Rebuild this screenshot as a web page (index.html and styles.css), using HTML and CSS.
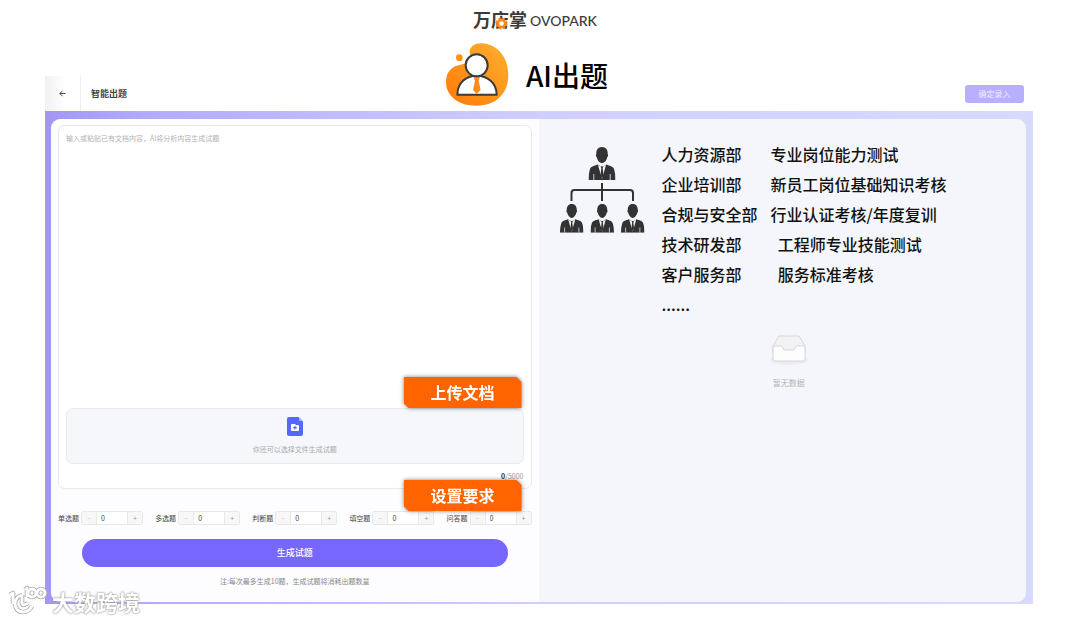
FILE: index.html
```html
<!DOCTYPE html>
<html lang="zh-CN">
<head>
    <meta charset="UTF-8">
    <title>AI出题</title>
    <link rel="stylesheet" href="styles.css">
</head>
<body>

    <div class="hero">
        <div class="brand">
            <span class="brand-cn">万店掌</span>
            <svg class="brand-gear" viewBox="0 0 14 14" aria-hidden="true">
                <circle cx="7" cy="7" r="4" fill="#fff" stroke="#ff8a1c" stroke-width="3"/>
                <circle cx="7" cy="7" r="5.8" fill="none" stroke="#ff8a1c" stroke-width="1.4" stroke-dasharray="2.6 2"/>
            </svg>
            <span class="brand-en">OVOPARK</span>
        </div>
        <div class="hero-title">
            <svg class="avatar" viewBox="48 128 189 189" aria-hidden="true">
                <defs>
                    <linearGradient id="blob" x1="1" y1="0" x2="0" y2="1">
                        <stop offset="0" stop-color="#ffb02e"/>
                        <stop offset="1" stop-color="#ff7a0a"/>
                    </linearGradient>
                </defs>
                <path d="M119 153C121 138 134 129 153 129C200 130 235 168 235 224C235 280 198 316 140 316C84 316 48 286 48 245C48 215 65 197 92 193C113 190 126 180 121 165Z" fill="url(#blob)"/>
                <circle cx="88" cy="172" r="10" fill="#ff9417"/>
                <path d="M82 283C82 247 108 226 140 226S200 247 200 283Z" fill="#fff" stroke="#3b3b3b" stroke-width="6" stroke-linejoin="round"/>
                <path d="M130 229H150L146 241L152 269L140 281L129 269L135 241Z" fill="#ff8a1c"/>
                <circle cx="140" cy="195" r="33" fill="#fff" stroke="#3b3b3b" stroke-width="6"/>
            </svg>
            <h1>AI出题</h1>
        </div>
    </div>

    <div class="app">
        <div class="app-header">
            <button class="back" aria-label="返回">
                <svg viewBox="0 0 8 8" aria-hidden="true"><path d="M7.5 4H1M4 1L1 4L4 7" fill="none" stroke="#333" stroke-width="1"/></svg>
            </button>
            <h2>智能出题</h2>
            <button class="confirm">确定录入</button>
        </div>

        <div class="frame">
            <div class="editor">
                <div class="doc-box">
                    <textarea class="doc-text" aria-label="文档内容" placeholder="输入或粘贴已有文档内容，AI将分析内容生成试题"></textarea>
                    <div class="upload-wrap">
                        <button class="upload">
                            <svg viewBox="0 0 16 19" aria-hidden="true">
                                <path d="M2 0H11.500L16 4.500V17Q16 19 14 19H2Q0 19 0 17V2Q0 0 2 0Z" fill="#5468fa"/>
                                <path d="M12 0L16 4H13Q12 4 12 3Z" fill="#a9b4ff"/>
                                <path d="M5 7H8L9 8H11Q12 8 12 9V13Q12 14 11 14H5Q4 14 4 13V8Q4 7 5 7Z" fill="#fff"/>
                                <path d="M8 9V12.500M6.200 10.700H9.800" stroke="#5468fa" stroke-width="1.200"/>
                            </svg>
                            <span>你还可以选择文件生成试题</span>
                        </button>
                        <div class="tag"><span>上传文档</span></div>
                    </div>
                    <div class="count"><b>0</b>/5000</div>
                </div>

                <div class="types">
                    <div class="type">
                        <label for="single">单选题</label>
                        <div class="stepper"><button aria-label="减少单选题">−</button><input id="single" type="text" value="0"><button aria-label="增加单选题">+</button></div>
                    </div>
                    <div class="type">
                        <label for="multi">多选题</label>
                        <div class="stepper"><button aria-label="减少多选题">−</button><input id="multi" type="text" value="0"><button aria-label="增加多选题">+</button></div>
                    </div>
                    <div class="type">
                        <label for="judge">判断题</label>
                        <div class="stepper"><button aria-label="减少判断题">−</button><input id="judge" type="text" value="0"><button aria-label="增加判断题">+</button></div>
                    </div>
                    <div class="type">
                        <label for="blank">填空题</label>
                        <div class="stepper"><button aria-label="减少填空题">−</button><input id="blank" type="text" value="0"><button aria-label="增加填空题">+</button></div>
                    </div>
                    <div class="type">
                        <label for="essay">问答题</label>
                        <div class="stepper"><button aria-label="减少问答题">−</button><input id="essay" type="text" value="0"><button aria-label="增加问答题">+</button></div>
                    </div>
                    <div class="tag tag-types"><span>设置要求</span></div>
                </div>

                <button class="generate">生成试题</button>
                <p class="note">注:每次最多生成10题，生成试题将消耗出题数量</p>
            </div>

            <div class="result">
                <div class="scenes">
                    <svg class="org" viewBox="0 0 85 86" aria-hidden="true">
                        <defs>
                            <symbol id="person" viewBox="0 0 27 33">
                                <path d="M13.500 0C17.500 0 19.500 3 19.200 7C20 7.500 19.500 10 18.700 10.200C18 13.500 16 16 13.500 16S9 13.500 8.300 10.200C7.500 10 7 7.500 7.800 7C7.500 3 9.500 0 13.500 0Z" fill="#333"/>
                                <path d="M9 17.500L13.500 20L18 17.500C21 19 24.500 19 25.500 22C26.500 25 27 29 27 33H0C0 29 .5 25 1.500 22C2.500 19 6 19 9 17.500Z" fill="#333"/>
                                <path d="M9.500 18L13.500 32L17.500 18L13.500 20Z" fill="#f5f6fb"/>
                                <path d="M12.300 19.500H14.700L14.200 21.500L15 28L13.500 32L12 28L12.800 21.500Z" fill="#333"/>
                                <path d="M5.300 27V33M21.700 27V33" stroke="#f5f6fb" stroke-width=".8"/>
                            </symbol>
                        </defs>
                        <use href="#person" x="28.500" y="0" width="27" height="33"/>
                        <path d="M42 36V54M11.500 54V46Q11.500 43 14.500 43H70Q73 43 73 46V54" fill="none" stroke="#333" stroke-width="2"/>
                        <use href="#person" x="0" y="57" width="23.500" height="28.700"/>
                        <use href="#person" x="30.500" y="57" width="23.500" height="28.700"/>
                        <use href="#person" x="61" y="57" width="23.500" height="28.700"/>
                    </svg>
                    <table class="scene-list">
                        <tr><td>人力资源部</td><td>专业岗位能力测试</td></tr>
                        <tr><td>企业培训部</td><td>新员工岗位基础知识考核</td></tr>
                        <tr><td>合规与安全部</td><td>行业认证考核/年度复训</td></tr>
                        <tr><td>技术研发部</td><td>&nbsp;&nbsp;工程师专业技能测试</td></tr>
                        <tr><td>客户服务部</td><td>&nbsp;&nbsp;服务标准考核</td></tr>
                        <tr><td>......</td><td></td></tr>
                    </table>
                </div>
                <div class="empty">
                    <svg viewBox="0 0 38 32" aria-hidden="true">
                        <ellipse cx="19" cy="26" rx="19" ry="5" fill="#ecedf1"/>
                        <path d="M3 12L9 2H29L35 12V20H3Z" fill="#f2f2f4" stroke="#d5d6da"/>
                        <path d="M3 12H11Q13 12 13 14Q13 16 15 16H23Q25 16 25 14Q25 12 27 12H35V25Q35 27 33 27H5Q3 27 3 25Z" fill="#fdfdfd" stroke="#d5d6da"/>
                    </svg>
                    <p>暂无数据</p>
                </div>
            </div>
        </div>
    </div>

    <div class="watermark">
        <svg viewBox="0 0 40 30" aria-hidden="true">
            <defs>
                <path id="mark" d="M2 9L5 7V18M14 9Q7 11 7 18Q8 26 15 26Q21 26 24 20M14 9V18Q16 20 20 17M17 4L19 2V11M28 7A4 4 0 1 0 20 7A4 4 0 1 0 28 7M37 7A4 4 0 1 0 29 7A4 4 0 1 0 37 7"/>
            </defs>
            <use href="#mark" fill="none" stroke="#b0b0b0" stroke-width="4.600" stroke-linejoin="round"/>
            <use href="#mark" fill="none" stroke="#fff" stroke-width="2.800" stroke-linejoin="round"/>
        </svg>
        <span>大数跨境</span>
    </div>

</body>
</html>
```
FILE: styles.css
```css
* {
    box-sizing: border-box;
}

body {
    display: flex;
    flex-direction: column;
    min-height: 100vh;
    margin: 0;
    padding: 0 47px 17px 45px;
    background-color: #fff;
    font-family: "Noto Sans CJK SC", sans-serif;
    font-size: 7px;
    line-height: 10px;
    color: #444;
}

h1, h2, p {
    margin: 0;
}

button, input, textarea {
    margin: 0;
    padding: 0;
    border: none;
    font: inherit;
    color: inherit;
}

button {
    cursor: pointer;
}

svg {
    display: block;
    overflow: visible;
}

/* top logo and title */
.hero {
    display: flex;
    flex-direction: column;
    align-items: center;
    padding: 8px 8px 0 0;
}

.brand {
    display: flex;
    position: relative;
    align-items: center;
    gap: 3px;
    height: 22px;
    color: #3a3a3a;
}

.brand-cn {
    font-size: 18px;
    font-weight: 700;
    line-height: 20px;
}

.brand-gear {
    position: absolute;
    left: 22px;
    top: 9px;
    width: 13px;
    height: 13px;
}

.brand-en {
    padding-top: 3px;
    font-family: Lato, sans-serif;
    font-size: 14px;
    font-weight: 500;
    line-height: 19px;
}

.hero-title {
    display: flex;
    align-items: center;
    gap: 17px;
    margin-top: 13px;
    padding-right: 16px;
}

.avatar {
    width: 63px;
    height: 63px;
}

.hero-title h1 {
    font-size: 28px;
    font-weight: 500;
    line-height: 40px;
    color: #000;
}

/* app window, its header sits beside the title */
.app {
    display: flex;
    flex: 1;
    flex-direction: column;
    margin-top: -30px;
}

.app-header {
    display: flex;
    align-items: center;
    height: 35px;
    padding-right: 9px;
}

.back {
    display: flex;
    align-items: center;
    justify-content: center;
    width: 36px;
    height: 35px;
    border-right: 1px solid #eee;
    background: linear-gradient(to right, #f1f1f1, #fff 60%);
}

.back svg {
    width: 7px;
    height: 7px;
}

.app-header h2 {
    flex: 1;
    padding-left: 10px;
    font-size: 9px;
    font-weight: 700;
}

.confirm {
    width: 59px;
    height: 18px;
    border-radius: 3px;
    background-color: #b8b0ff;
    font-size: 8px;
    color: #eeebff;
}

.frame {
    display: grid;
    flex: 1;
    grid-template-columns: 1fr 1fr;
    padding: 8px 7px 2px 6px;
    background: linear-gradient(to right, #a196f2, #b3aaff 10%, #d0ceff 50%, #d7daff);
}

.editor {
    display: flex;
    flex-direction: column;
    padding: 6px 7px 16px;
    border-radius: 9px 0 0 9px;
    background-color: #fdfdff;
}

.doc-box {
    display: flex;
    flex: 1;
    flex-direction: column;
    padding: 7px;
    border: 1px solid #e9e9ee;
    border-radius: 7px;
    background-color: #fff;
}

.doc-text {
    flex: 1;
    resize: none;
    outline: none;
    background: none;
}

.doc-text::placeholder {
    color: #b3b3b3;
}

.upload-wrap {
    position: relative;
}

.upload {
    display: flex;
    flex-direction: column;
    align-items: center;
    gap: 8px;
    width: 100%;
    height: 56px;
    padding-top: 8px;
    border: 1px solid #e8eaef;
    border-radius: 7px;
    background-color: #f6f7fb;
    color: #aaa;
}

.upload svg {
    width: 16px;
    height: 19px;
}

.count {
    margin-top: 7px;
    text-align: right;
    color: #999;
}

.count b {
    color: #333;
}

/* orange callouts */
.tag {
    position: absolute;
    right: 2px;
    bottom: 100%;
    filter: drop-shadow(0 0 2px rgba(0, 0, 0, 0.5));
}

.tag span {
    display: block;
    width: 118px;
    background-color: #ff6400;
    clip-path: polygon(0 0, 113px 0, 100% 5px, 100% 100%, 5px 100%, 0 26px);
    font-size: 16px;
    font-weight: 700;
    line-height: 31px;
    text-align: center;
    color: #fff;
}

.tag-types {
    right: 10px;
}

.types {
    display: flex;
    position: relative;
    justify-content: space-between;
    margin-top: 22px;
}

.type {
    display: flex;
    align-items: center;
    gap: 2px;
}

.stepper {
    display: flex;
    width: 62px;
    height: 14px;
    border: 1px solid #e8e8e8;
    border-radius: 2px;
}

.stepper button {
    width: 14px;
    background-color: #f7f7f7;
    color: #999;
}

.stepper button:first-child {
    color: #ccc;
}

.stepper input {
    flex: 1;
    min-width: 0;
    padding-left: 4px;
    border: 1px solid #e8e8e8;
    border-width: 0 1px;
    background-color: #fff;
}

.generate {
    height: 28px;
    margin: 14px 24px 0;
    border-radius: 14px;
    background-color: #7767ff;
    font-size: 9px;
    font-weight: 500;
    color: #fff;
}

.note {
    margin-top: 9px;
    text-align: center;
    color: #888;
}

.result {
    padding: 20px 8px 22px 21px;
    border-radius: 0 9px 9px 0;
    background-color: #f5f6fb;
}

.scenes {
    display: flex;
    gap: 17px;
}

.org {
    flex: none;
    width: 85px;
    height: 86px;
    margin-top: 8px;
}

.scene-list {
    border-collapse: collapse;
    font-size: 16px;
    font-weight: 500;
    line-height: 30px;
    color: #111;
}

.scene-list td {
    padding: 0 13px 0 0;
    white-space: nowrap;
}

.empty {
    display: flex;
    flex-direction: column;
    align-items: center;
    gap: 12px;
    margin-top: 15px;
    font-size: 8px;
    color: #b5b5b5;
}

.empty svg {
    width: 38px;
    height: 32px;
}

.watermark {
    display: flex;
    position: fixed;
    left: 8px;
    bottom: 5px;
    align-items: center;
    gap: 4px;
    font-size: 22px;
    font-weight: 700;
    line-height: 30px;
    color: #fff;
    text-shadow: 0 0 2px #999, 0 0 2px #999;
}

.watermark svg {
    width: 40px;
    height: 30px;
}
```
